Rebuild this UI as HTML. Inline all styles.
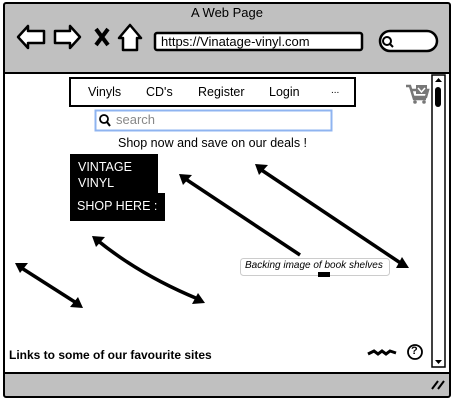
<!DOCTYPE html>
<html><head><style>
body{margin:0;width:454px;height:402px;background:#fff;position:relative;overflow:hidden;font-family:"Liberation Sans",sans-serif}
.a{position:absolute}
</style></head><body>
<div class="a" style="left:3px;top:2px;width:444px;height:392px;border:2px solid #000;border-radius:3px;background:#c0c0c0"></div>
<div class="a" style="left:5px;top:72px;width:444px;height:298px;background:#fff;border-top:2px solid #000;border-bottom:2px solid #000"></div>
<div class="a" style="left:0;top:5px;width:454px;text-align:center;font-size:13px">A Web Page</div>
<svg class="a" style="left:0;top:0" width="454" height="402">
<g fill="#fff" stroke="#000" stroke-width="2.5" stroke-linejoin="round">
<path d="M18 37 L28 26 L28 31 L44 31 L44 43 L28 43 L28 48 Z"/>
<path d="M80 37 L70 26 L70 31 L55 31 L55 43 L70 43 L70 48 Z"/>
<path d="M119 38 L130 25 L141 38 L137 38 L137 50 L123 50 L123 38 Z"/>
<rect x="155" y="33" width="207" height="17" rx="2"/>
<rect x="380" y="31" width="57" height="20" rx="10"/>
</g>
<path d="M96 29 L108 45 M108 29 L96 45" stroke="#000" stroke-width="4"/>
<circle cx="387" cy="41" r="4" fill="none" stroke="#000" stroke-width="2"/>
<path d="M390 44 L393 47" stroke="#000" stroke-width="2"/>
<rect x="70" y="78" width="285" height="28" fill="#fff" stroke="#000" stroke-width="2"/>
<rect x="95.5" y="110.5" width="236" height="20" fill="#fff" stroke="#8fb4f0" stroke-width="2"/>
<circle cx="104" cy="119" r="4" fill="none" stroke="#000" stroke-width="1.8"/>
<path d="M107 122 L110 126" stroke="#000" stroke-width="2"/>
<rect x="70" y="154" width="88" height="40" fill="#000"/>
<rect x="70" y="193" width="95" height="28" fill="#000"/>
<g stroke="#000" stroke-width="3.5" fill="none">
<path d="M20 267 L78 304"/><path d="M97 240 Q140 275 198 299"/><path d="M184 178 L300 255"/><path d="M260 169 L402 264"/>
</g>
<g fill="#000">
<path d="M15 263 L28 263 L20 273 Z"/><path d="M83 308 L70 307 L78 297 Z"/>
<path d="M92 236 L105 237 L96 247 Z"/><path d="M205 303 L192 304 L198 293 Z"/>
<path d="M179 174 L192 175 L183 185 Z"/><path d="M255 164 L268 165 L259 175 Z"/>
<path d="M409 268 L396 268 L402 257 Z"/>
</g>
<rect x="240.5" y="258.5" width="149" height="17" rx="3" fill="#fff" stroke="#ccc"/>
<rect x="318" y="272" width="12" height="5" fill="#000"/>
<g stroke="#777" stroke-width="2.5" fill="none"><path d="M406 86 L410 86 L414 99 L426 99"/><path d="M411 90 L428 90 L426 97 L413 97"/></g>
<circle cx="415" cy="102" r="1.8" fill="#777"/><circle cx="424" cy="102" r="1.8" fill="#777"/>
<rect x="416" y="85" width="11" height="9" fill="#777"/><path d="M418 88 L421.5 92 L425 88" stroke="#fff" stroke-width="1.5" fill="none"/>
<rect x="432" y="75" width="13" height="292" fill="#fff" stroke="#000" stroke-width="1.5"/>
<path d="M435 82 L442 82 L438.5 78 Z M435 360 L442 360 L438.5 364 Z" fill="#000"/>
<rect x="435" y="87" width="6" height="20" rx="3" fill="#000"/>
<path d="M368 354 L374 351 L378 354 L382 351 L386 354 L390 351 L396 353" stroke="#000" stroke-width="3" fill="none"/>
<circle cx="415" cy="352" r="7" fill="#fff" stroke="#000" stroke-width="1.8"/>
<path d="M432 389 L438 381 M438 389 L444 381" stroke="#000" stroke-width="2"/>
</svg>
<div class="a" style="left:161px;top:34px;font-size:13px">https://Vinatage-vinyl.com</div>
<div class="a" style="left:88px;top:85px;font-size:12.5px">Vinyls</div>
<div class="a" style="left:146px;top:85px;font-size:12.5px">CD's</div>
<div class="a" style="left:198px;top:85px;font-size:12.5px">Register</div>
<div class="a" style="left:269px;top:85px;font-size:12.5px">Login</div>
<div class="a" style="left:331px;top:85px;font-size:10px">...</div>
<div class="a" style="left:116px;top:112px;font-size:13px;color:#888">search</div>
<div class="a" style="left:118px;top:136px;font-size:12.5px">Shop now and save on our deals !</div>
<div class="a" style="left:78px;top:159px;font-size:12.5px;color:#fff;line-height:16px">VINTAGE<br>VINYL</div>
<div class="a" style="left:77px;top:199px;font-size:12.5px;color:#fff">SHOP HERE :</div>
<div class="a" style="left:245px;top:260px;font-size:10px;font-style:italic">Backing image of book shelves</div>
<div class="a" style="left:9px;top:348px;font-size:12px;font-weight:bold">Links to some of our favourite sites</div>
<div class="a" style="left:411px;top:345px;font-size:11px;font-weight:bold">?</div>
</body></html>
